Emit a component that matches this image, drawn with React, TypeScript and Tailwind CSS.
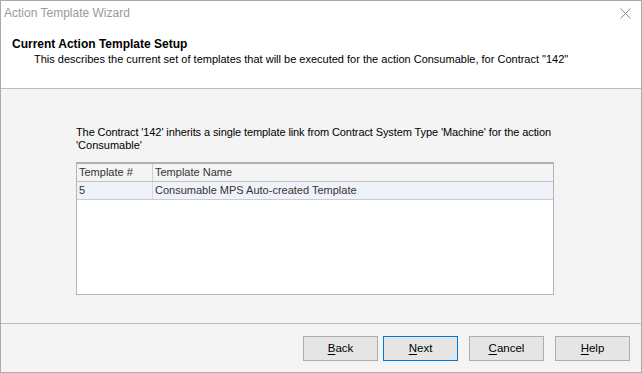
import React from "react";

const font = { fontFamily: '"Liberation Sans", Arial, sans-serif' };

function Btn({ label, primary }: { label: string; primary?: boolean }) {
  return (
    <div
      className={`w-[75px] h-[25px] flex items-center justify-center text-[11.5px] text-black bg-[#e5e5e5] border ${
        primary ? "border-[#0078d7]" : "border-[#adadad]"
      }`}
    >
      <span>
        <span className="underline underline-offset-2">{label[0]}</span>
        {label.slice(1)}
      </span>
    </div>
  );
}

export default function App() {
  return (
    <div style={font} className="w-[642px] h-[373px] border border-[#aaaaaa] bg-[#f4f4f4] flex flex-col overflow-hidden">
      <div className="h-[88px] bg-white border-b border-[#bcbcbc] flex flex-col shrink-0">
        <div className="flex items-start justify-between pl-[3px] pr-[10px] pt-[4px] h-[36px]">
          <span className="text-[12px] text-[#9a9a9a] leading-[16px]">Action Template Wizard</span>
          <svg width="11" height="11" viewBox="0 0 11 11" className="mt-[3px]">
            <path d="M0.5 0.5 L10.5 10.5 M10.5 0.5 L0.5 10.5" stroke="#8a8a8a" strokeWidth="1" />
          </svg>
        </div>
        <div className="pl-[11px] text-[12px] font-bold leading-[15px] text-black">Current Action Template Setup</div>
        <div className="pl-[33px] text-[11px] leading-[15px] text-black whitespace-nowrap">
          This describes the current set of templates that will be executed for the action Consumable, for Contract "142"
        </div>
      </div>
      <div className="flex-1 flex flex-col pl-[75px] pr-[87px] pt-[37px]">
        <div className="text-[11px] leading-[13px] text-black w-[478px]">
          <span className="whitespace-nowrap tracking-[-0.1px]">
            The Contract '142' inherits a single template link from Contract System Type 'Machine' for the action
          </span>
          <br />
          'Consumable'
        </div>
        <div className="mt-[10px] h-[133px] w-[478px] border border-[#b4b4b4] border-t-2 border-t-[#b0b0b0] bg-white flex flex-col">
          <div className="flex h-[18px] bg-[#f4f4f4] border-b border-[#c4c4c4] text-[11px] text-[#333333]">
            <div className="w-[76px] border-r border-[#d0d0d0] pl-[2px] leading-[17px]">Template #</div>
            <div className="flex-1 pl-[2px] leading-[17px]">Template Name</div>
          </div>
          <div className="flex h-[18px] bg-[#eff3f9] border-b border-[#c8cdd4] text-[11px] text-[#333333]">
            <div className="w-[76px] border-r border-[#d6d9de] pl-[2px] leading-[17px]">5</div>
            <div className="flex-1 pl-[2px] leading-[17px]">Consumable MPS Auto-created Template</div>
          </div>
        </div>
      </div>
      <div className="h-[49px] border-t border-[#bcbcbc] flex items-start justify-end pt-[12px] pr-[11px] shrink-0">
        <Btn label="Back" />
        <div className="ml-[5px]">
          <Btn label="Next" primary />
        </div>
        <div className="ml-[11px]">
          <Btn label="Cancel" />
        </div>
        <div className="ml-[11px]">
          <Btn label="Help" />
        </div>
      </div>
    </div>
  );
}
